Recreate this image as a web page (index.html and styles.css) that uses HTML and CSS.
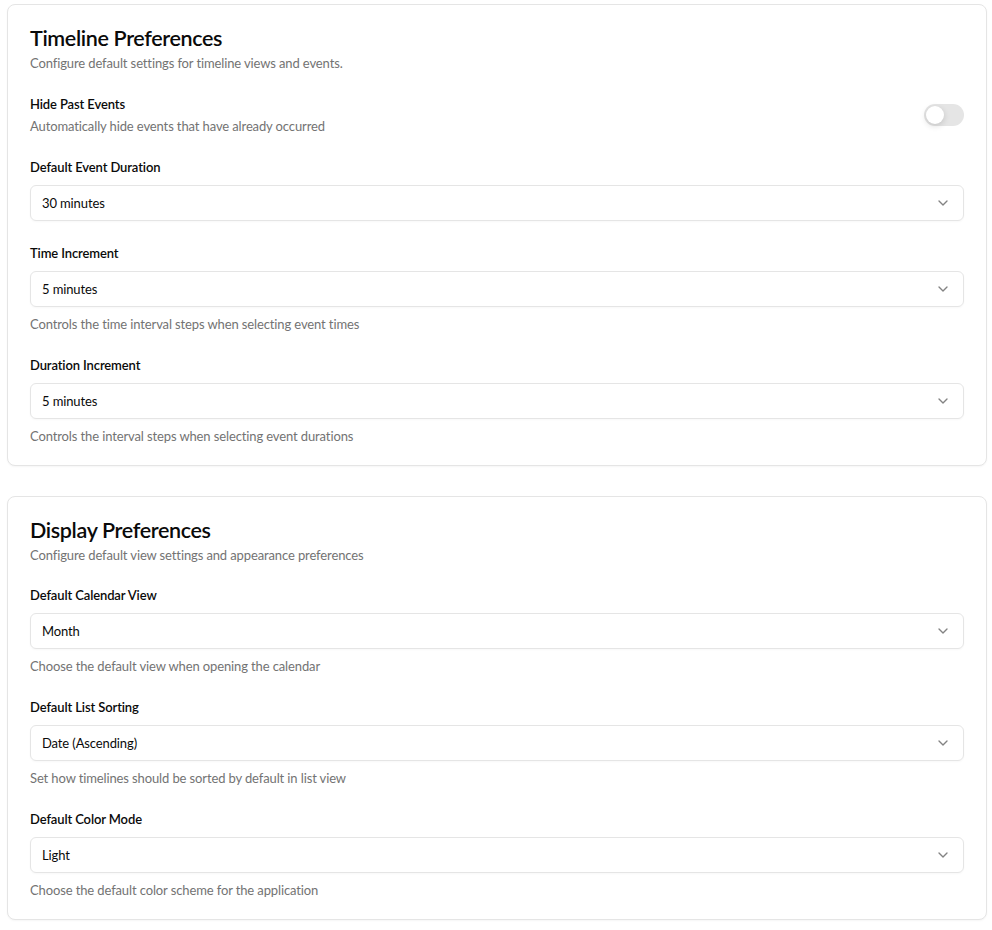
FILE: index.html
```html
<!DOCTYPE html>
<html lang="en">
<head>
<meta charset="utf-8">
<title>Preferences</title>
<link rel="stylesheet" href="styles.css">
</head>
<body>
<main class="page">
  <section class="card">
    <header class="card-header">
      <h2 class="card-title">Timeline Preferences</h2>
      <p class="card-desc">Configure default settings for timeline views and events.</p>
    </header>
    <div class="field switch-row">
      <div class="switch-text">
        <div class="label">Hide Past Events</div>
        <div class="help tight">Automatically hide events that have already occurred</div>
      </div>
      <button class="switch" type="button" aria-label="Hide Past Events"><span class="thumb"></span></button>
    </div>
    <div class="field">
      <div class="label">Default Event Duration</div>
      <div class="select"><span>30 minutes</span><svg class="chev" viewBox="0 0 24 24"><path d="m6 9 6 6 6-6"/></svg></div>
    </div>
    <div class="field">
      <div class="label">Time Increment</div>
      <div class="select"><span>5 minutes</span><svg class="chev" viewBox="0 0 24 24"><path d="m6 9 6 6 6-6"/></svg></div>
      <div class="help">Controls the time interval steps when selecting event times</div>
    </div>
    <div class="field">
      <div class="label">Duration Increment</div>
      <div class="select"><span>5 minutes</span><svg class="chev" viewBox="0 0 24 24"><path d="m6 9 6 6 6-6"/></svg></div>
      <div class="help">Controls the interval steps when selecting event durations</div>
    </div>
  </section>

  <section class="card">
    <header class="card-header">
      <h2 class="card-title">Display Preferences</h2>
      <p class="card-desc">Configure default view settings and appearance preferences</p>
    </header>
    <div class="field">
      <div class="label">Default Calendar View</div>
      <div class="select"><span>Month</span><svg class="chev" viewBox="0 0 24 24"><path d="m6 9 6 6 6-6"/></svg></div>
      <div class="help">Choose the default view when opening the calendar</div>
    </div>
    <div class="field">
      <div class="label">Default List Sorting</div>
      <div class="select"><span>Date (Ascending)</span><svg class="chev" viewBox="0 0 24 24"><path d="m6 9 6 6 6-6"/></svg></div>
      <div class="help">Set how timelines should be sorted by default in list view</div>
    </div>
    <div class="field">
      <div class="label">Default Color Mode</div>
      <div class="select"><span>Light</span><svg class="chev" viewBox="0 0 24 24"><path d="m6 9 6 6 6-6"/></svg></div>
      <div class="help">Choose the default color scheme for the application</div>
    </div>
  </section>
</main>
</body>
</html>
```

FILE: styles.css
```css
* { box-sizing: border-box; }
html, body { margin: 0; background: #ffffff; }
body {
  font-family: Lato, Roboto, "Liberation Sans", sans-serif;
  color: #0a0a0a;
  font-size: 13px;
  letter-spacing: -0.12px;
}
.page {
  display: flex;
  flex-direction: column;
  gap: 30px;
  padding: 4px 5px 10px 7px;
}
.card {
  border: 1px solid #e5e5e5;
  border-radius: 8px;
  background: #fff;
  padding: 19px 22px 20px 22px;
  display: flex;
  flex-direction: column;
  gap: 22px;
  box-shadow: 0 1px 2px rgba(0,0,0,0.04);
}
.card-header { display: flex; flex-direction: column; margin-bottom: -2px; }
.card-title {
  margin: 0;
  font-size: 21.5px;
  line-height: 29px;
  font-weight: 600;
  letter-spacing: -0.35px;
}
.card-desc {
  margin: 0;
  font-size: 13px;
  line-height: 20px;
  color: #737373;
}
.field { display: flex; flex-direction: column; }
.label {
  font-size: 13px;
  line-height: 20px;
  font-weight: 600;
}
.select {
  margin-top: 8px;
  height: 36px;
  border: 1px solid #e5e5e5;
  border-radius: 6px;
  padding: 0 12px 0 11px;
  display: flex;
  align-items: center;
  justify-content: space-between;
  font-size: 13px;
  box-shadow: 0 1px 2px rgba(0,0,0,0.03);
}
.chev {
  width: 16px;
  height: 16px;
  fill: none;
  stroke: #0a0a0a;
  opacity: 0.5;
  stroke-width: 2;
  stroke-linecap: round;
  stroke-linejoin: round;
}
.help {
  margin-top: 8px;
  font-size: 13px;
  line-height: 18px;
  color: #737373;
}
.help.tight { margin-top: 2px; line-height: 20px; }
.switch-row {
  flex-direction: row;
  align-items: center;
  justify-content: space-between;
  padding-top: 1px;
  margin-bottom: -1px;
}
.switch {
  width: 40px;
  height: 22px;
  border: none;
  border-radius: 11px;
  background: #e5e5e5;
  padding: 2px;
  display: flex;
  align-items: center;
  cursor: pointer;
}
.thumb {
  width: 18px;
  height: 18px;
  border-radius: 50%;
  background: #fff;
  box-shadow: 0 2px 6px rgba(0,0,0,0.15);
}
```
